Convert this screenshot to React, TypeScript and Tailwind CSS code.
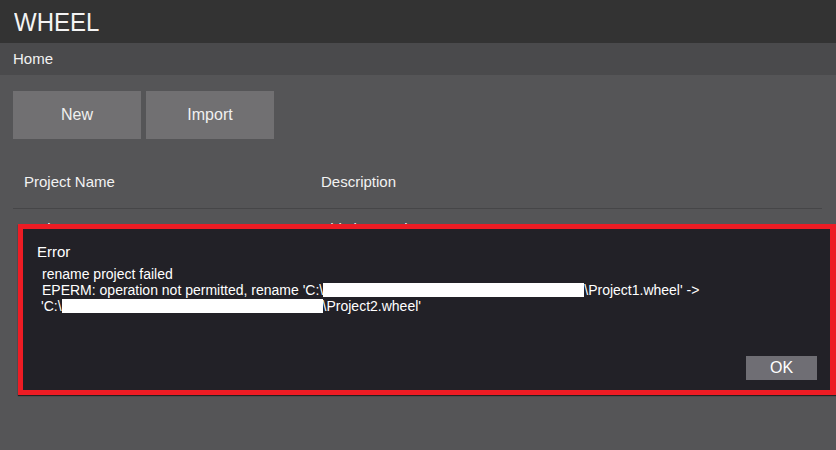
import React from "react";

const Redacted = () => (
  <span className="inline-block w-[261px] h-[14px] bg-white align-[-2px]"></span>
);

const App = () => {
  return (
    <div className="relative w-[836px] h-[450px] overflow-hidden bg-[#555557] text-[#f2f2f2] font-['Liberation_Sans',Arial,sans-serif]">
      <div className="h-[43px] bg-[#333333] px-[14px] flex items-center">
        <span className="text-[24px] leading-none text-[#f4f4f4] scale-y-110 origin-left inline-block">WHEEL</span>
      </div>
      <div className="h-[32px] bg-[#4a4a4c] px-[13px] flex items-center text-[15px]">Home</div>

      <div className="px-[13px] pt-[16px]">
        <div className="flex gap-[5px]">
          <button className="w-[128px] h-[48px] bg-[#717072] text-[16px] text-[#f0f0f0]">New</button>
          <button className="w-[128px] h-[48px] bg-[#717072] text-[16px] text-[#f0f0f0]">Import</button>
        </div>

        <div className="w-[809px] mt-[16px]">
          <div className="flex h-[54px] pt-[2px] items-center border-b border-[#464648] text-[15px]">
            <div className="w-[308px] pl-[11px]">Project Name</div>
            <div>Description</div>
          </div>
          <div className="flex h-[40px] items-center text-[15px]">
            <div className="w-[308px] pl-[11px]">Project1</div>
            <div>This is a Project1</div>
          </div>
        </div>
      </div>

      {/* error dialog over the list */}
      <div className="absolute left-[18px] top-[224px] w-[818px] h-[171px] border-[5px] border-r-[6px] border-[#ed1c24] bg-[#222127] shadow-[0_1px_1px_rgba(0,0,0,0.6)] flex flex-col">
        <div className="pl-[14px] pt-[14px] text-[15px] leading-[17px] text-white">Error</div>
        <div className="pl-[19px] pt-[6px] text-[14px] leading-[16px] text-white">
          <div>rename project failed</div>
          <div>
            EPERM: operation not permitted, rename 'C:\<Redacted />\Project1.wheel' -&gt;
          </div>
          <div className="-ml-px">
            'C:\<Redacted />\Project2.wheel'
          </div>
        </div>
        <div className="mt-auto flex justify-end pr-[13px] pb-[10px]">
          <button className="w-[71px] h-[24px] bg-[#6f6e74] text-[16px] text-white leading-none">OK</button>
        </div>
      </div>
    </div>
  );
};

export default App;
